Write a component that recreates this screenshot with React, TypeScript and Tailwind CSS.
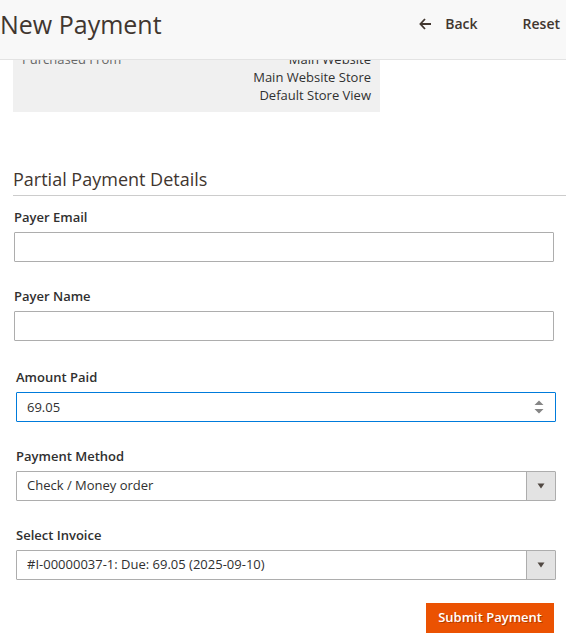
import { useState } from "react";
import type { ReactNode } from "react";

const control =
  "block h-[30px] w-full appearance-none rounded-[1px] border border-[#adadad] bg-white px-[10px] text-[13px] text-[#303030] outline-none focus:border-[#007bdb]";

function Field({ id, label, children }: { id: string; label: string; children: ReactNode }) {
  return (
    <div>
      <label htmlFor={id} className="mb-[6px] block text-[13px] leading-[18px] font-semibold text-[#303030]">
        {label}
      </label>
      <div className="relative">{children}</div>
    </div>
  );
}

function SelectField({ id, label, option }: { id: string; label: string; option: string }) {
  return (
    <Field id={id} label={label}>
      <select id={id} className={control}>
        <option>{option}</option>
      </select>
      <span className="pointer-events-none absolute inset-y-px right-px flex w-[29px] items-center justify-center border-l border-[#adadad] bg-[#e3e3e3]">
        <svg width="8" height="6" viewBox="0 0 8 6" fill="#514943" aria-hidden="true">
          <path d="M0.5 0.5h7L4 5.5z" />
        </svg>
      </span>
    </Field>
  );
}

export default function App() {
  const [amount, setAmount] = useState("69.05");

  return (
    <div className="bg-white font-['Open_Sans','Noto_Sans',sans-serif] text-[#303030]">
      <header className="flex h-[60px] items-start justify-between border-b border-[#e3e3e3] bg-[#f8f8f8] pr-[6px]">
        <h1 className="pt-1 text-[25px] leading-10 text-[#41362f]">New Payment</h1>
        <div className="flex items-center gap-[45px] pt-[14px] text-[14px] leading-5 font-semibold text-[#41362f]">
          <button type="button" className="flex items-center gap-[14px]">
            <svg width="12" height="12" viewBox="0 0 12 12" fill="none" stroke="#41362f" strokeWidth="1.8" aria-hidden="true">
              <path d="M6 1L1.4 6L6 11M1.4 6H12" />
            </svg>
            Back
          </button>
          <button type="button">Reset</button>
        </div>
      </header>

      <main>
        <section className="ml-[13px] flex h-[52px] w-[367px] max-w-full items-end overflow-hidden bg-[#f0f0f0] px-[9px] pb-2 text-[13px] leading-[18px]">
          <dl className="flex w-full justify-between">
            <dt className="text-[#666666]">Purchased From</dt>
            <dd className="text-right">
              Main Website
              <br />
              Main Website Store
              <br />
              Default Store View
            </dd>
          </dl>
        </section>

        <h2 className="mt-[55px] ml-[13px] border-b border-[#cccccc] pb-[4px] text-[18px] leading-6 text-[#41362f]">
          Partial Payment Details
        </h2>

        <form onSubmit={(event) => event.preventDefault()}>
          <div className="mt-3 mr-3 ml-[14px] flex flex-col gap-[25px]">
            <Field id="payer-email" label="Payer Email">
              <input id="payer-email" type="email" className={control} />
            </Field>
            <Field id="payer-name" label="Payer Name">
              <input id="payer-name" type="text" className={control} />
            </Field>
          </div>

          <div className="mt-[27px] mr-[10px] ml-4 flex flex-col gap-[25px]">
            <Field id="amount-paid" label="Amount Paid">
              <input
                id="amount-paid"
                type="number"
                step="0.01"
                value={amount}
                onChange={(event) => setAmount(event.target.value)}
                className="block h-[30px] w-full rounded-[1px] border border-[#007bdb] bg-white px-[10px] text-[13px] text-[#303030] outline-none [appearance:textfield]"
              />
              <svg
                className="pointer-events-none absolute top-[8px] right-3"
                width="10"
                height="14"
                viewBox="0 0 10 14"
                fill="#868686"
                aria-hidden="true"
              >
                <path d="M0.5 5h9L5 0.5zM0.5 9h9L5 13.5z" />
              </svg>
            </Field>
            <SelectField id="payment-method" label="Payment Method" option="Check / Money order" />
            <SelectField id="invoice" label="Select Invoice" option="#I-00000037-1: Due: 69.05 (2025-09-10)" />
          </div>

          <div className="mt-[23px] mr-3 flex justify-end">
            <button
              type="submit"
              className="h-[30px] bg-[#eb5202] px-3 text-[13px] font-semibold text-white [text-shadow:1px_1px_0_rgba(0,0,0,0.25)]"
            >
              Submit Payment
            </button>
          </div>
        </form>
      </main>
    </div>
  );
}
